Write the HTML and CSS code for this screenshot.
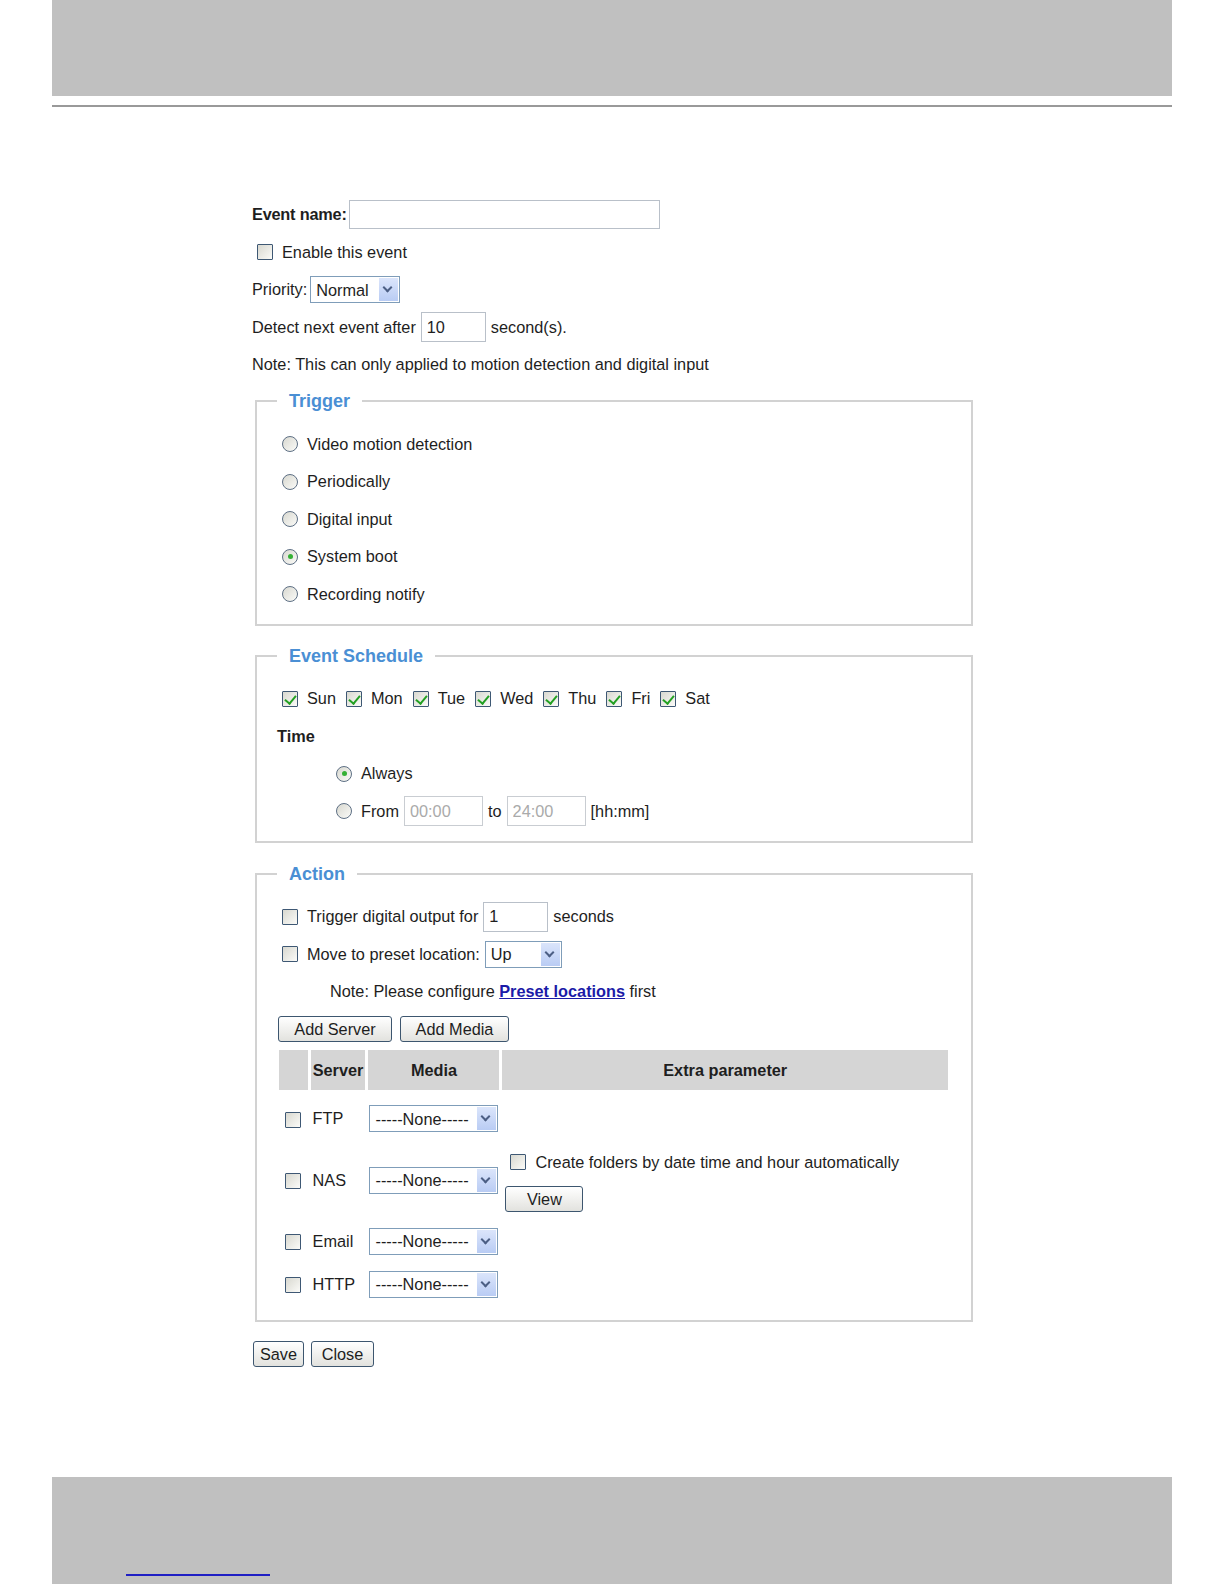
FILE: index.html
```html
<!DOCTYPE html>
<html>
<head>
    <title>Event Settings</title>
    <link rel="stylesheet" href="styles.css">
</head>
<body>
    <div class="top-band"></div>
    <div class="top-rule"></div>

    <form class="event-form">
        <div class="row name-row">
            <label class="field-label" for="eventName">Event name:</label>
            <input class="text-field name-field" type="text" id="eventName">
        </div>
        <div class="row">
            <label class="opt"><input type="checkbox" class="check">Enable this event</label>
        </div>
        <div class="row tight">
            <span>Priority:</span>
            <span class="dropdown dd-priority">
                <select><option>Normal</option><option>High</option><option>Low</option></select>
            </span>
        </div>
        <div class="row">
            <span>Detect next event after</span>
            <input class="text-field short-field" type="text" value="10">
            <span>second(s).</span>
        </div>
        <div class="row">
            Note: This can only applied to motion detection and digital input
        </div>

        <fieldset class="group">
            <legend>Trigger</legend>
            <div class="row"><label class="opt"><input type="radio" name="trigger" class="radio">Video motion detection</label></div>
            <div class="row"><label class="opt"><input type="radio" name="trigger" class="radio">Periodically</label></div>
            <div class="row"><label class="opt"><input type="radio" name="trigger" class="radio">Digital input</label></div>
            <div class="row"><label class="opt"><input type="radio" name="trigger" class="radio" checked>System boot</label></div>
            <div class="row"><label class="opt"><input type="radio" name="trigger" class="radio">Recording notify</label></div>
        </fieldset>

        <fieldset class="group">
            <legend>Event Schedule</legend>
            <div class="row days">
                <label class="opt"><input type="checkbox" class="check" checked>Sun</label>
                <label class="opt"><input type="checkbox" class="check" checked>Mon</label>
                <label class="opt"><input type="checkbox" class="check" checked>Tue</label>
                <label class="opt"><input type="checkbox" class="check" checked>Wed</label>
                <label class="opt"><input type="checkbox" class="check" checked>Thu</label>
                <label class="opt"><input type="checkbox" class="check" checked>Fri</label>
                <label class="opt"><input type="checkbox" class="check" checked>Sat</label>
            </div>
            <div class="row"><strong>Time</strong></div>
            <div class="row indent">
                <label class="opt"><input type="radio" name="time" class="radio" checked>Always</label>
            </div>
            <div class="row indent">
                <label class="opt"><input type="radio" name="time" class="radio">From</label>
                <input class="text-field time-field" type="text" value="00:00" disabled>
                <span>to</span>
                <input class="text-field time-field" type="text" value="24:00" disabled>
                <span>[hh:mm]</span>
            </div>
        </fieldset>

        <fieldset class="group action">
            <legend>Action</legend>
            <div class="row">
                <label class="opt"><input type="checkbox" class="check">Trigger digital output for</label>
                <input class="text-field short-field" type="text" value="1">
                <span>seconds</span>
            </div>
            <div class="row">
                <label class="opt"><input type="checkbox" class="check">Move to preset location:</label>
                <span class="dropdown dd-preset">
                    <select><option>Up</option><option>Down</option></select>
                </span>
            </div>
            <div class="row note">
                Note: Please configure&nbsp;<a href="#">Preset locations</a>&nbsp;first
            </div>
            <div class="row buttons">
                <button type="button" class="btn btn-server">Add Server</button>
                <button type="button" class="btn btn-media">Add Media</button>
            </div>

            <table class="srv-table">
                <tr>
                    <th class="c-check"></th>
                    <th class="c-server">Server</th>
                    <th class="c-media">Media</th>
                    <th class="c-extra">Extra parameter</th>
                </tr>
                <tr class="srv-ftp">
                    <td class="c-check"><input type="checkbox" class="check"></td>
                    <td class="c-server">FTP</td>
                    <td class="c-media"><span class="dropdown dd-media"><select><option>-----None-----</option></select></span></td>
                    <td class="c-extra"></td>
                </tr>
                <tr class="srv-nas">
                    <td class="c-check"><input type="checkbox" class="check"></td>
                    <td class="c-server">NAS</td>
                    <td class="c-media"><span class="dropdown dd-media"><select><option>-----None-----</option></select></span></td>
                    <td class="c-extra">
                        <div class="folder-opt">
                            <label class="opt"><input type="checkbox" class="check">Create folders by date time and hour automatically</label>
                        </div>
                        <button type="button" class="btn btn-view">View</button>
                    </td>
                </tr>
                <tr class="srv-email">
                    <td class="c-check"><input type="checkbox" class="check"></td>
                    <td class="c-server">Email</td>
                    <td class="c-media"><span class="dropdown dd-media"><select><option>-----None-----</option></select></span></td>
                    <td class="c-extra"></td>
                </tr>
                <tr class="srv-http">
                    <td class="c-check"><input type="checkbox" class="check"></td>
                    <td class="c-server">HTTP</td>
                    <td class="c-media"><span class="dropdown dd-media"><select><option>-----None-----</option></select></span></td>
                    <td class="c-extra"></td>
                </tr>
            </table>
        </fieldset>

        <div class="form-buttons">
            <button type="button" class="btn btn-save">Save</button>
            <button type="button" class="btn btn-close">Close</button>
        </div>
    </form>

    <div class="bottom-band">
        <span class="page-link"></span>
    </div>
</body>
</html>
```

FILE: styles.css
```css
* {
    box-sizing: border-box;
}

body {
    margin: 0;
    height: 1584px;
    display: flex;
    flex-direction: column;
    font-family: 'Liberation Sans', Arial, sans-serif;
    font-size: 16.3px;
    color: #1e1e1e;
    background: #fff;
}

.top-band {
    margin: 0 52px;
    height: 96px;
    background: #c0c0c0;
}

.top-rule {
    margin: 9px 52px 0;
    height: 2px;
    background: #999;
}

.bottom-band {
    margin: auto 52px 0;
    height: 107px;
    background: #c0c0c0;
    padding: 97px 0 0 74px;
}

.page-link {
    display: block;
    width: 144px;
    height: 2px;
    background: #1f1fc4;
}

/* form body */

.event-form {
    padding: 89px 0 0 252px;
}

.row {
    height: 37.5px;
    display: flex;
    align-items: center;
    gap: 5px;
    white-space: nowrap;
}

.row.tight {
    gap: 3px;
}

.row.name-row {
    gap: 2px;
}

.field-label {
    font-weight: bold;
    letter-spacing: -0.2px;
}

.opt {
    display: inline-flex;
    align-items: center;
}

.text-field {
    height: 30px;
    border: 1px solid #b9c0c9;
    padding: 0 5px;
    font: inherit;
    color: #1e1e1e;
    background: #fff;
}

.text-field:disabled {
    color: #aaa;
    border-color: #c9cdd2;
}

.name-field {
    width: 311px;
    height: 29px;
}

.short-field {
    width: 65px;
}

.time-field {
    width: 79px;
}

/* checkbox + radio */

.check,
.radio {
    -webkit-appearance: none;
    appearance: none;
    position: relative;
    flex: none;
    width: 16px;
    height: 16px;
    margin: 0 9px 0 5px;
    border: 1px solid #3e5874;
    background: linear-gradient(135deg, #d8d8d0, #fbfbf8);
}

.check {
    border-radius: 1px;
}

.check:checked::after {
    content: "";
    position: absolute;
    left: 4px;
    top: 1px;
    width: 5px;
    height: 9px;
    border: solid #22a022;
    border-width: 0 2px 2px 0;
    transform: rotate(40deg);
}

.radio {
    border-radius: 50%;
    border-color: #5d6f84;
}

.radio:checked::after {
    content: "";
    position: absolute;
    left: 4.5px;
    top: 4.5px;
    width: 5px;
    height: 5px;
    border-radius: 50%;
    background: #35b035;
}

/* drop downs */

.dropdown {
    position: relative;
    display: inline-block;
    flex: none;
}

.dropdown select {
    -webkit-appearance: none;
    appearance: none;
    width: 100%;
    height: 27px;
    border: 1px solid #7f9db9;
    border-radius: 0;
    background: #fff;
    font: inherit;
    color: #1e1e1e;
    padding: 0 22px 0 5px;
}

.dropdown::after {
    content: "";
    position: absolute;
    top: 2px;
    right: 2px;
    bottom: 2px;
    width: 19px;
    background: linear-gradient(#dbe5fb, #b9ccf4);
    pointer-events: none;
}

.dropdown::before {
    content: "";
    position: absolute;
    top: 8px;
    right: 9px;
    width: 5px;
    height: 5px;
    border: solid #4c5f84;
    border-width: 0 2px 2px 0;
    transform: rotate(45deg);
    z-index: 1;
    pointer-events: none;
}

.dd-priority {
    width: 90px;
}

.dd-preset {
    width: 77px;
}

.dd-media {
    width: 129px;
}

/* group boxes */

.group {
    width: 718px;
    margin: 6.5px 0 0 3px;
    padding: 13.5px 20px 11px;
    border: 2px solid #d2d2d2;
}

.group + .group {
    margin-top: 18.5px;
}

.group legend {
    padding: 0 12px;
    font-size: 18px;
    line-height: 22px;
    font-weight: bold;
    color: #4a8fd4;
}

.group.action {
    margin-top: 19.5px;
    padding-bottom: 18px;
}

.days {
    gap: 0;
}

.days .opt {
    margin-right: 5px;
}

.indent {
    padding-left: 54px;
}

.note {
    padding-left: 53px;
    gap: 0;
}

.note a {
    color: #1b1ba8;
    font-weight: bold;
}

.buttons {
    gap: 8px;
    margin-left: 1px;
}

/* buttons */

.btn {
    height: 26px;
    padding: 0;
    font: inherit;
    color: #1e1e1e;
    border: 1px solid #3d566f;
    border-radius: 3px;
    background: linear-gradient(#ffffff, #e2e2de);
}

.btn-server {
    width: 114px;
}

.btn-media {
    width: 109px;
}

.btn-view {
    width: 78px;
}

.btn-save {
    width: 51px;
}

.btn-close {
    width: 63px;
}

.form-buttons {
    display: flex;
    gap: 7px;
    margin: 19px 0 0 1px;
}

/* server table */

.srv-table {
    border-spacing: 3px;
    margin: -1px 0 0 -1px;
}

.srv-table th {
    height: 40px;
    background: #d5d5d5;
    font-weight: bold;
    padding: 0;
}

.srv-table td {
    padding: 0;
    vertical-align: middle;
    white-space: nowrap;
}

.c-check {
    width: 29px;
    text-align: center;
}

.srv-table td.c-check .check {
    margin: 0;
    vertical-align: middle;
}

.c-server {
    width: 55px;
}

td.c-server {
    padding-left: 2px;
}

.c-media {
    width: 131px;
}

td.c-media {
    padding-left: 1px;
}

.c-extra {
    width: 447px;
}

td.c-extra {
    padding-left: 3px;
}

.srv-ftp {
    height: 51px;
}

.srv-nas {
    height: 66px;
}

.srv-email {
    height: 50px;
}

.srv-http {
    height: 30px;
}

.folder-opt {
    height: 28px;
    display: flex;
    align-items: center;
    margin-bottom: 10px;
}
```
